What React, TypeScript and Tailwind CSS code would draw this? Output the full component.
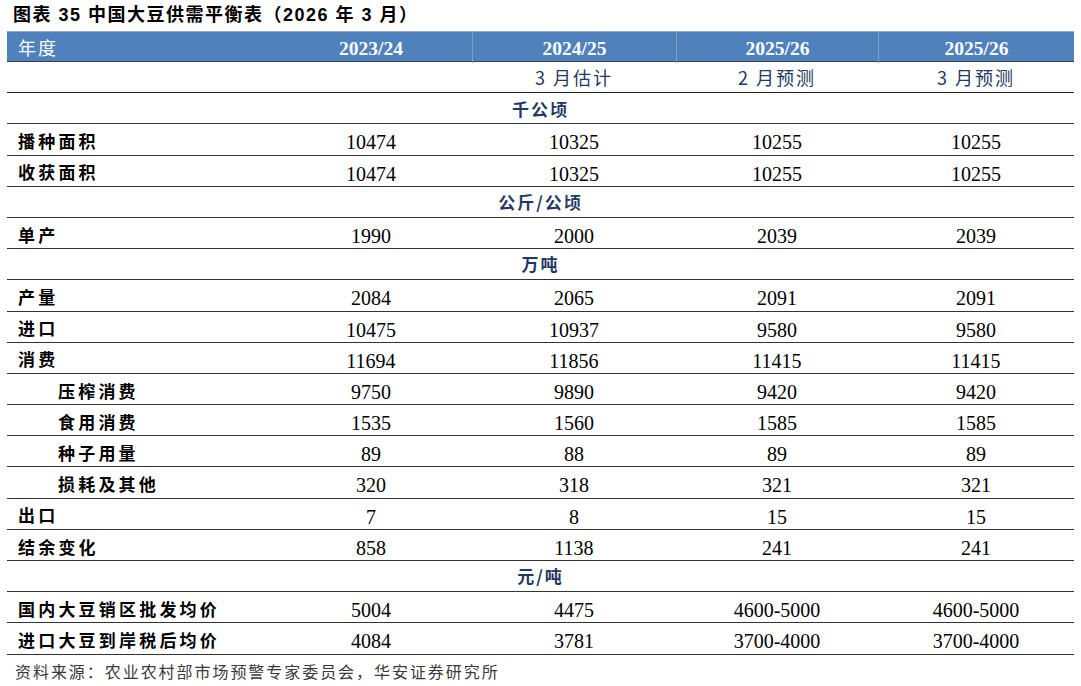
const cjk = "font-['Noto_Sans_CJK_SC','Noto_Sans_CJK_JP',sans-serif]";
const serif = "font-['Liberation_Serif','Times_New_Roman',serif]";

type Row =
  | { kind: "unit"; label: string }
  | { kind: "data"; label: string; indent?: boolean; values: string[] };

const rows: Row[] = [
  { kind: "unit", label: "千公顷" },
  { kind: "data", label: "播种面积", values: ["10474", "10325", "10255", "10255"] },
  { kind: "data", label: "收获面积", values: ["10474", "10325", "10255", "10255"] },
  { kind: "unit", label: "公斤/公顷" },
  { kind: "data", label: "单产", values: ["1990", "2000", "2039", "2039"] },
  { kind: "unit", label: "万吨" },
  { kind: "data", label: "产量", values: ["2084", "2065", "2091", "2091"] },
  { kind: "data", label: "进口", values: ["10475", "10937", "9580", "9580"] },
  { kind: "data", label: "消费", values: ["11694", "11856", "11415", "11415"] },
  { kind: "data", label: "压榨消费", indent: true, values: ["9750", "9890", "9420", "9420"] },
  { kind: "data", label: "食用消费", indent: true, values: ["1535", "1560", "1585", "1585"] },
  { kind: "data", label: "种子用量", indent: true, values: ["89", "88", "89", "89"] },
  { kind: "data", label: "损耗及其他", indent: true, values: ["320", "318", "321", "321"] },
  { kind: "data", label: "出口", values: ["7", "8", "15", "15"] },
  { kind: "data", label: "结余变化", values: ["858", "1138", "241", "241"] },
  { kind: "unit", label: "元/吨" },
  { kind: "data", label: "国内大豆销区批发均价", values: ["5004", "4475", "4600-5000", "4600-5000"] },
  { kind: "data", label: "进口大豆到岸税后均价", values: ["4084", "3781", "3700-4000", "3700-4000"] },
];

const grid = "grid grid-cols-[263px_202px_204px_202px_1fr]";

export default function App() {
  return (
    <div className="w-[1081px] h-[686px] bg-white overflow-hidden">
      <div
        className={`h-[31px] pl-[13px] pt-[3px] text-[18px] font-bold leading-[24px] tracking-[1.5px] text-black font-['Liberation_Sans','Noto_Sans_CJK_SC',sans-serif]`}
      >
        图表 35 中国大豆供需平衡表（2026 年 3 月）
      </div>

      <div className="mx-[7px] w-[1067px]">
        {/* header band */}
        <div className={`${grid} h-[31px] bg-[#4f81bd] border-t border-[#9aa5b4] border-b-[1.5px] border-b-[#3a3f47] text-white`}>
          <div className={`${cjk} flex items-center pl-[11px] text-[18px] tracking-[2px]`}>年度</div>
          {["2023/24", "2024/25", "2025/26", "2025/26"].map((y, i) => (
            <div
              key={i}
              className={`${serif} flex items-center justify-center pt-[2px] text-[19.5px] font-bold ${i > 0 ? "border-l border-[#7d9fcd]" : ""}`}
            >
              {y}
            </div>
          ))}
        </div>

        {/* sub header */}
        <div className={`${grid} h-[31.2px] border-b border-[#222]`}>
          <div />
          <div />
          {["3 月估计", "2 月预测", "3 月预测"].map((t, i) => (
            <div
              key={i}
              className={`${cjk} flex items-center justify-center pt-[1px] text-[18px] tracking-[2px] text-[#1f3a5f]`}
            >
              {t}
            </div>
          ))}
        </div>

        {rows.map((r, i) =>
          r.kind === "unit" ? (
            <div
              key={i}
              className={`${cjk} h-[31.2px] flex items-center justify-center border-b border-[#333] text-[17px] font-bold tracking-[2px] text-[#1f3864]`}
            >
              {r.label}
            </div>
          ) : (
            <div key={i} className={`${grid} h-[31.2px] border-b border-[#333]`}>
              <div
                className={`${cjk} flex items-center text-[17px] font-bold tracking-[3.2px] text-black ${r.indent ? "pl-[51px]" : "pl-[11px]"}`}
              >
                {r.label}
              </div>
              {r.values.map((v, j) => (
                <div key={j} className={`${serif} flex items-center justify-center pt-[3px] text-[20px] text-black`}>
                  {v}
                </div>
              ))}
            </div>
          )
        )}

        <div className={`${cjk} pl-[8px] pt-[4px] text-[16px] tracking-[1.95px] text-[#3a3a3a]`}>
          资料来源：农业农村部市场预警专家委员会，华安证券研究所
        </div>
      </div>
    </div>
  );
}
